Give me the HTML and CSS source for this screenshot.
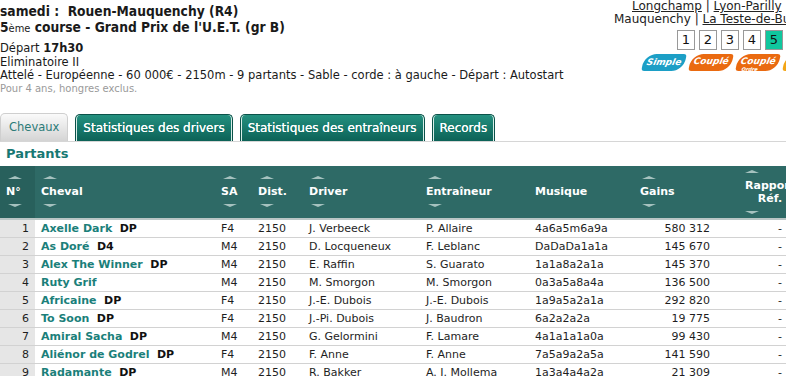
FILE: index.html
```html
<!DOCTYPE html>
<html>
<head>
  <meta name="viewport" content="width=device-width, initial-scale=1.0">
  <title>Rouen-Mauquenchy - Grand Prix de l'U.E.T.</title>
  <link rel="stylesheet" href="styles.css">
</head>
<body>
  <div class="top">
    <div class="course-info">
      <h1>samedi :&nbsp; Rouen-Mauquenchy (R4)</h1>
      <h2>5<span class="sup">ème</span> course - Grand Prix de l'U.E.T. (gr B)</h2>
      <div class="depart">Départ <b>17h30</b></div>
      <div>Eliminatoire II</div>
      <div>Attelé - Européenne - 60 000€ - 2150m - 9 partants - Sable - corde : à gauche - Départ : Autostart</div>
      <div class="cond">Pour 4 ans, hongres exclus.</div>
    </div>
    <div class="nav">
      <div class="hippos">
        <a href="#">Longchamp</a> | <a href="#">Lyon-Parilly</a> | Rouen-<br>
        Mauquenchy | <a href="#">La Teste-de-Buch</a> | <a href="#">Vincennes</a>
      </div>
      <div class="pages">
        <a href="#">1</a><a href="#">2</a><a href="#">3</a><a href="#">4</a><a href="#" class="on">5</a>
      </div>
      <div class="paris">
        <span class="pari blue">Simple</span>
        <span class="pari orange">Couplé</span>
        <span class="pari orange">Couplé<small>Ordre</small></span>
        <span class="pari yellow">Trio</span>
      </div>
    </div>
  </div>

  <div class="tabs">
    <a href="#" class="tab active">Chevaux</a>
    <a href="#" class="tab">Statistiques des drivers</a>
    <a href="#" class="tab">Statistiques des entraîneurs</a>
    <a href="#" class="tab">Records</a>
  </div>

  <div class="panel">
    <h3>Partants</h3>
    <table class="partants">
      <thead>
        <tr>
          <th class="c-num"><span class="sort">N°</span></th>
          <th class="c-cheval"><span class="sort">Cheval</span></th>
          <th class="c-sa"><span class="sort">SA</span></th>
          <th class="c-dist"><span class="sort">Dist.</span></th>
          <th class="c-driver"><span class="sort">Driver</span></th>
          <th class="c-entr"><span class="sort">Entraîneur</span></th>
          <th class="c-mus">Musique</th>
          <th class="c-gains"><span class="sort">Gains</span></th>
          <th class="c-rap"><span class="sort tall">Rapport<br>Réf.</span></th>
        </tr>
      </thead>
      <tbody>
        <tr><td class="c-num">1</td><td><a href="#" class="cheval">Axelle Dark</a> <b>DP</b></td><td>F4</td><td>2150</td><td>J. Verbeeck</td><td>P. Allaire</td><td>4a6a5m6a9a</td><td class="c-gains">580 312</td><td class="c-rap">-</td></tr>
        <tr><td class="c-num">2</td><td><a href="#" class="cheval">As Doré</a> <b>D4</b></td><td>M4</td><td>2150</td><td>D. Locqueneux</td><td>F. Leblanc</td><td>DaDaDa1a1a</td><td class="c-gains">145 670</td><td class="c-rap">-</td></tr>
        <tr><td class="c-num">3</td><td><a href="#" class="cheval">Alex The Winner</a> <b>DP</b></td><td>M4</td><td>2150</td><td>E. Raffin</td><td>S. Guarato</td><td>1a1a8a2a1a</td><td class="c-gains">145 370</td><td class="c-rap">-</td></tr>
        <tr><td class="c-num">4</td><td><a href="#" class="cheval">Ruty Grif</a></td><td>M4</td><td>2150</td><td>M. Smorgon</td><td>M. Smorgon</td><td>0a3a5a8a4a</td><td class="c-gains">136 500</td><td class="c-rap">-</td></tr>
        <tr><td class="c-num">5</td><td><a href="#" class="cheval">Africaine</a> <b>DP</b></td><td>F4</td><td>2150</td><td>J.-E. Dubois</td><td>J.-E. Dubois</td><td>1a9a5a2a1a</td><td class="c-gains">292 820</td><td class="c-rap">-</td></tr>
        <tr><td class="c-num">6</td><td><a href="#" class="cheval">To Soon</a> <b>DP</b></td><td>F4</td><td>2150</td><td>J.-Pi. Dubois</td><td>J. Baudron</td><td>6a2a2a2a</td><td class="c-gains">19 775</td><td class="c-rap">-</td></tr>
        <tr><td class="c-num">7</td><td><a href="#" class="cheval">Amiral Sacha</a> <b>DP</b></td><td>M4</td><td>2150</td><td>G. Gelormini</td><td>F. Lamare</td><td>4a1a1a1a0a</td><td class="c-gains">99 430</td><td class="c-rap">-</td></tr>
        <tr><td class="c-num">8</td><td><a href="#" class="cheval">Aliénor de Godrel</a> <b>DP</b></td><td>F4</td><td>2150</td><td>F. Anne</td><td>F. Anne</td><td>7a5a9a2a5a</td><td class="c-gains">141 590</td><td class="c-rap">-</td></tr>
        <tr><td class="c-num">9</td><td><a href="#" class="cheval">Radamante</a> <b>DP</b></td><td>M4</td><td>2150</td><td>R. Bakker</td><td>A. J. Mollema</td><td>1a3a4a4a2a</td><td class="c-gains">21 309</td><td class="c-rap">-</td></tr>
      </tbody>
    </table>
  </div>
</body>
</html>
```

FILE: styles.css
```css
html {
  overflow: hidden;
}
body {
  margin: 0;
  font-family: 'DejaVu Sans', Verdana, sans-serif;
  font-size: 11.5px;
  color: #1a1a1a;
  background-color: #ffffff;
  width: 850px;
}
a {
  color: inherit;
}

/* en-tete de la course */
.top {
  display: flex;
  padding-top: 3px;
}
.course-info {
  line-height: 13.5px;
  width: 614px;
  flex-shrink: 0;
}
.course-info h1,
.course-info h2 {
  font-family: 'DejaVu Sans Condensed', 'DejaVu Sans', sans-serif;
  font-size: 13.7px;
  margin: 0 0 0 0;
  line-height: 16px;
}
.course-info h2 {
  margin-bottom: 5px;
}
.course-info .sup {
  font-size: 11px;
  font-weight: normal;
}
.course-info .cond {
  font-size: 10px;
  color: #9a9a9a;
  line-height: 12px;
}
.nav {
  width: 172px;
  display: flex;
  flex-direction: column;
  align-items: flex-end;
}
.hippos {
  align-self: flex-start;
  text-indent: 18px;
  white-space: nowrap;
  font-size: 12px;
  line-height: 13px;
  margin-top: -3px;
  color: #222;
}
.pages {
  display: flex;
  gap: 4px;
  margin-top: 4px;
  margin-right: 3px;
}
.pages a {
  display: block;
  width: 16px;
  height: 18px;
  line-height: 18px;
  text-align: center;
  border: 1px solid #999;
  text-decoration: none;
  font-size: 13px;
  color: #111;
}
.pages a.on {
  background-color: #0fc79e;
}
.paris {
  display: flex;
  gap: 5px;
  margin-top: 4px;
  margin-right: -40px;
}
.pari {
  display: block;
  width: 42px;
  height: 17px;
  line-height: 16px;
  border-radius: 12px 3px 12px 3px;
  transform: skewX(-12deg);
  color: #fff;
  font-weight: bold;
  font-style: italic;
  font-size: 9px;
  text-align: center;
  position: relative;
}
.pari small {
  position: absolute;
  left: 6px;
  bottom: -1px;
  font-size: 5px;
  line-height: 6px;
}
.pari.blue { background-color: #1c9fc6; }
.pari.orange { background-color: #ea6a10; line-height: 14px; }
.pari.yellow { background-color: #f3a516; }

/* onglets */
.tabs {
  display: flex;
  gap: 7px;
  margin-top: 18px;
  border-bottom: 1px solid #d6d6d6;
  height: 28px;
  align-items: flex-end;
}
.tab {
  display: block;
  height: 26px;
  line-height: 26px;
  padding: 0 7px;
  border: 1px solid #0b5249;
  border-bottom: none;
  border-radius: 5px 5px 0 0;
  background: linear-gradient(#24907f, #0c6257);
  box-shadow: inset 1px 0 0 #d9eee9, inset -1px 0 0 #d9eee9;
  color: #ffffff;
  font-size: 12px;
  text-decoration: none;
  text-shadow: 0 0 0.5px #fff;
}
.tab.active {
  height: 27px;
  padding: 0 8px 0 8px;
  border: 1px solid #cfcfcf;
  border-bottom: none;
  background: linear-gradient(#fafafa, #d4d4d4);
  box-shadow: none;
  color: #2b7b78;
  text-shadow: none;
  font-size: 11.5px;
}

/* tableau des partants */
.panel h3 {
  margin: 0;
  padding: 0 0 0 6px;
  height: 24px;
  line-height: 24px;
  font-size: 13px;
  color: #177873;
}
.partants {
  border-collapse: collapse;
  width: 822px;
  font-size: 11px;
}
.partants thead tr {
  height: 53px;
  background-color: #2e6a66;
  border-bottom: 2px solid #b9c6c5;
}
.partants th {
  color: #ffffff;
  text-align: left;
  padding: 0 0 0 6px;
  font-size: 11px;
  font-weight: bold;
  vertical-align: middle;
  white-space: nowrap;
}
.partants th.c-num {
  background-color: #28605c;
}
.sort {
  display: inline-block;
  position: relative;
  line-height: 13px;
}
.sort::before,
.sort::after {
  content: "";
  position: absolute;
  left: 2px;
  border-left: 7px solid transparent;
  border-right: 7px solid transparent;
}
.sort::before {
  top: -9px;
  border-bottom: 3px solid #a6c2bf;
}
.sort::after {
  bottom: -9px;
  border-top: 3px solid #a6c2bf;
}
.sort.tall::before { top: -9px; left: 0; }
.sort.tall::after { bottom: -9px; left: 0; }
.partants th.c-rap {
  text-align: center;
  padding: 0;
}
.c-num { width: 29px; }
.c-cheval { width: 174px; }
.c-sa { width: 31px; }
.c-dist { width: 45px; }
.c-driver { width: 111px; }
.c-entr { width: 103px; }
.c-mus { width: 99px; }
.c-gains { width: 70px; }
.partants td {
  height: 17px;
  padding: 0 0 0 6px;
  border-bottom: 1px solid #d2d2d2;
  white-space: nowrap;
  color: #1e1e1e;
}
.partants td.c-num {
  background-color: #e6e6e6;
  text-align: right;
  padding: 0 6px 0 0;
}
.partants td.c-gains {
  text-align: right;
  padding-right: 8px;
}
.partants td.c-rap {
  text-align: right;
  padding-right: 40px;
}
.cheval {
  color: #1b7f7a;
  font-weight: bold;
  text-decoration: none;
  margin-right: 4px;
}
.partants td b {
  color: #111;
}
```
